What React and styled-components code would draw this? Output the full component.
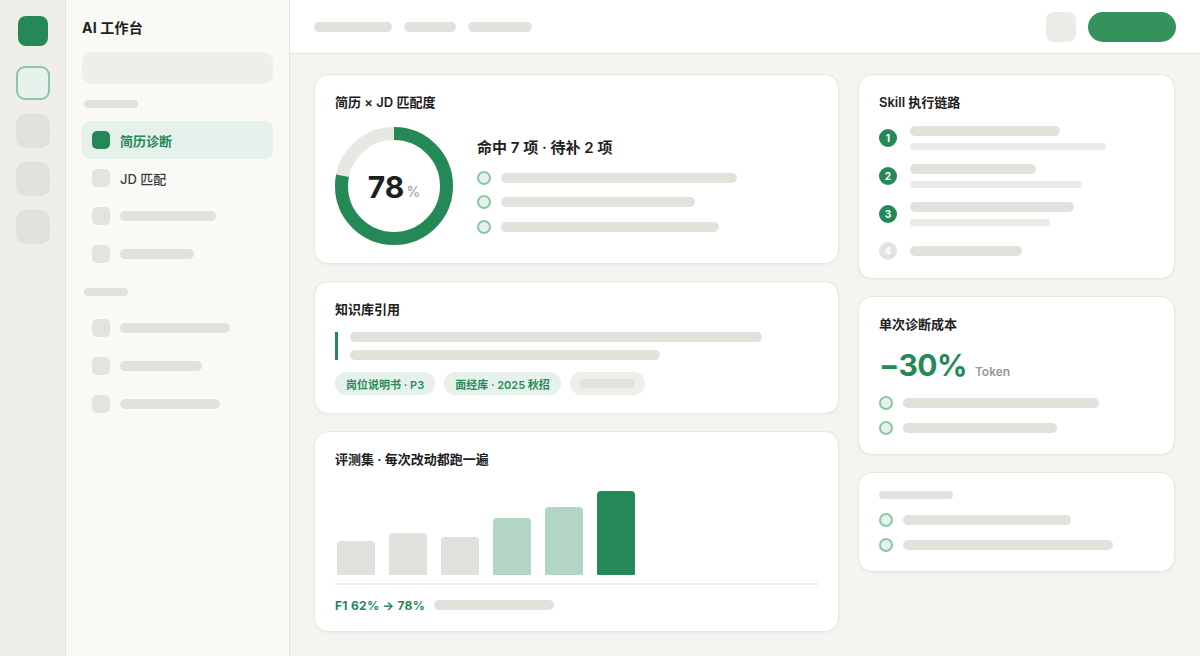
import React from "react";
import styled, { createGlobalStyle } from "styled-components";

const G = "#248957";
const BAR = "#e2e1dc";
const BAR_LIGHT = "#ecebe7";

const Global = createGlobalStyle`
  * { box-sizing: border-box; }
  html, body { margin: 0; padding: 0; }
  body {
    font-family: Inter, "Noto Sans CJK SC", "Noto Sans", sans-serif;
    color: #1d211e;
    background: #f5f4f0;
  }
`;

const Shell = styled.div`
  display: flex;
  width: 1200px;
  height: 656px;
  overflow: hidden;
`;

const Rail = styled.nav`
  width: 66px;
  flex: none;
  background: #efeee9;
  border-right: 1px solid #e4e2dc;
  display: flex;
  flex-direction: column;
  align-items: center;
  padding-top: 16px;
  gap: 14px;
`;

const RailLogo = styled.div`
  width: 30px;
  height: 30px;
  border-radius: 8px;
  background: ${G};
  margin-bottom: 6px;
`;

const RailItem = styled.div`
  width: 34px;
  height: 34px;
  border-radius: 9px;
  background: ${(p) => (p.$active ? "#e6f2ec" : "#e2e1dc")};
  border: ${(p) => (p.$active ? "2px solid #8cc6a6" : "none")};
`;

const Side = styled.aside`
  width: 224px;
  flex: none;
  background: #faf9f6;
  border-right: 1px solid #e6e4de;
  padding: 18px 16px 0;
  display: flex;
  flex-direction: column;
`;

const SideTitle = styled.div`
  font-size: 14px;
  font-weight: 700;
  line-height: 20px;
  letter-spacing: 0.2px;
`;

const Search = styled.div`
  margin-top: 14px;
  height: 32px;
  border-radius: 10px;
  background: #efeeea;
`;

const SectionLabel = styled.div`
  height: 8px;
  width: ${(p) => p.$w}px;
  border-radius: 4px;
  background: ${BAR};
  margin: ${(p) => p.$m};
`;

const NavList = styled.div`
  display: flex;
  flex-direction: column;
  margin-top: 13px;
`;

const NavItem = styled.div`
  height: 38px;
  display: flex;
  align-items: center;
  gap: 10px;
  padding-left: 10px;
  border-radius: 8px;
  background: ${(p) => (p.$active ? "#e6f1eb" : "transparent")};
  font-size: 13px;
  font-weight: ${(p) => (p.$active ? 600 : 500)};
  color: ${(p) => (p.$active ? G : "#3a3d3a")};
`;

const NavIcon = styled.span`
  width: 18px;
  height: 18px;
  border-radius: 5px;
  background: ${(p) => (p.$active ? G : "#e4e3df")};
  flex: none;
`;

const Bar = styled.span`
  display: block;
  width: ${(p) => p.$w}px;
  height: ${(p) => p.$h || 10}px;
  border-radius: ${(p) => (p.$h || 10) / 2}px;
  background: ${(p) => p.$c || BAR};
  flex: none;
`;

const Main = styled.main`
  flex: 1;
  display: flex;
  flex-direction: column;
  min-width: 0;
`;

const TopBar = styled.header`
  height: 54px;
  flex: none;
  background: #fff;
  border-bottom: 1px solid #e6e4de;
  display: flex;
  align-items: center;
  padding: 0 24px;
  gap: 12px;
`;

const TopSpacer = styled.div`
  flex: 1;
`;

const IconBtn = styled.div`
  width: 30px;
  height: 30px;
  border-radius: 8px;
  background: #ecebe6;
`;

const PrimaryBtn = styled.div`
  width: 88px;
  height: 30px;
  border-radius: 15px;
  background: #35925f;
`;

const Content = styled.div`
  display: grid;
  grid-template-columns: 525px 317px;
  column-gap: 19px;
  padding: 20px 24px;
  align-items: start;
`;

const Col = styled.div`
  display: flex;
  flex-direction: column;
  gap: ${(p) => p.$gap}px;
`;

const Card = styled.section`
  background: #fff;
  border: 1px solid #e8e6e0;
  border-radius: 14px;
  padding: 18px 20px;
  box-shadow: 0 1px 3px rgba(40, 36, 20, 0.04);
`;

const CardTitle = styled.h3`
  margin: 0;
  font-size: 13px;
  line-height: 18px;
  font-weight: 600;
  color: #1d211e;
`;

const MatchBody = styled.div`
  margin-top: 16px;
  display: flex;
  align-items: center;
  gap: 24px;
`;

const Donut = styled.div`
  position: relative;
  width: 118px;
  height: 118px;
  flex: none;
`;

const DonutLabel = styled.div`
  position: absolute;
  inset: 0;
  display: flex;
  align-items: center;
  justify-content: center;
  padding-top: 2px;
`;

const BigNum = styled.span`
  font-size: 30px;
  font-weight: 700;
  color: #1d211e;
  line-height: 1;
`;

const Pct = styled.span`
  font-size: 14px;
  color: #9a9a95;
  margin-left: 2px;
  margin-top: 8px;
`;

const MatchInfo = styled.div`
  display: flex;
  flex-direction: column;
`;

const MatchHead = styled.div`
  font-size: 15px;
  font-weight: 600;
  line-height: 20px;
  margin-bottom: 12px;
`;

const CheckList = styled.div`
  display: flex;
  flex-direction: column;
  gap: ${(p) => p.$gap}px;
  margin-top: ${(p) => p.$mt || 0}px;
`;

const CheckRow = styled.div`
  display: flex;
  align-items: center;
  height: 16px;
  gap: 10px;
`;

const Dot = styled.span`
  width: 14px;
  height: 14px;
  border-radius: 50%;
  border: 2px solid #8cc6a6;
  background: #e6f2ec;
  flex: none;
`;

const Quote = styled.div`
  margin-top: 14px;
  border-left: 3px solid ${G};
  padding-left: 12px;
  display: flex;
  flex-direction: column;
  gap: 8px;
`;

const Tags = styled.div`
  margin-top: 12px;
  display: flex;
  gap: 9px;
`;

const Tag = styled.span`
  height: 23px;
  padding: 0 ${(p) => (p.$muted ? 10 : 11)}px;
  border-radius: 12px;
  background: ${(p) => (p.$muted ? "#efeeea" : "#e6f1eb")};
  color: #2a8a59;
  font-size: 11px;
  font-weight: 600;
  display: inline-flex;
  align-items: center;
  white-space: nowrap;
`;

const Chart = styled.div`
  margin-top: 23px;
  height: 84px;
  display: flex;
  align-items: flex-end;
  gap: 14px;
  padding-left: 2px;
`;

const ChartBar = styled.div`
  width: 38px;
  border-radius: 4px 4px 1px 1px;
  background: ${(p) => p.$c};
`;

const Baseline = styled.div`
  margin-top: 8px;
  height: 2px;
  background: #eeede9;
`;

const ChartFoot = styled.div`
  margin-top: 12px;
  display: flex;
  align-items: center;
  gap: 9px;
  height: 16px;
`;

const FootText = styled.span`
  font-size: 12px;
  font-weight: 700;
  color: ${G};
  letter-spacing: 0.3px;
`;

const Steps = styled.div`
  margin-top: 15px;
  display: flex;
  flex-direction: column;
  gap: 14px;
`;

const Step = styled.div`
  display: flex;
  align-items: center;
  gap: 13px;
  margin-top: ${(p) => (p.$last ? 2 : 0)}px;
`;

const StepNum = styled.span`
  width: 18px;
  height: 18px;
  border-radius: 50%;
  background: ${(p) => (p.$done ? G : "#e4e3df")};
  color: #fff;
  font-size: 10px;
  font-weight: 700;
  display: flex;
  align-items: center;
  justify-content: center;
  flex: none;
`;

const StepLines = styled.div`
  display: flex;
  flex-direction: column;
  gap: 7px;
`;

const CostLine = styled.div`
  margin-top: 14px;
  display: flex;
  align-items: baseline;
  gap: 8px;
  height: 36px;
  line-height: 36px;
`;

const CostValue = styled.span`
  font-size: 30px;
  font-weight: 700;
  color: ${G};
  letter-spacing: -0.6px;
`;

const CostUnit = styled.span`
  font-size: 12px;
  font-weight: 600;
  color: #9a9893;
`;

const donutR = 52.5;
const circ = 2 * Math.PI * donutR;

function MatchDonut({ value }) {
  return (
    <Donut>
      <svg width="118" height="118" viewBox="0 0 118 118">
        <circle cx="59" cy="59" r={donutR} fill="none" stroke="#e8e7e2" strokeWidth="13" />
        <circle
          cx="59"
          cy="59"
          r={donutR}
          fill="none"
          stroke={G}
          strokeWidth="13"
          strokeDasharray={`${(circ * value) / 100} ${circ}`}
          transform="rotate(-90 59 59)"
        />
      </svg>
      <DonutLabel>
        <BigNum>{value}</BigNum>
        <Pct>%</Pct>
      </DonutLabel>
    </Donut>
  );
}

const navTop = [
  { label: "简历诊断", active: true },
  { label: "JD 匹配" },
  { w: 96 },
  { w: 74 },
];
const navBottom = [{ w: 110 }, { w: 82 }, { w: 100 }];

const bars = [
  { h: 34, c: "#e1e0dc" },
  { h: 42, c: "#e1e0dc" },
  { h: 38, c: "#e1e0dc" },
  { h: 57, c: "#b3d6c4" },
  { h: 68, c: "#b3d6c4" },
  { h: 84, c: G },
];

const steps = [
  { n: 1, a: 150, b: 196, done: true },
  { n: 2, a: 126, b: 172, done: true },
  { n: 3, a: 164, b: 140, done: true },
  { n: 4, a: 112 },
];

export default function App() {
  return (
    <Shell>
      <Global />
      <Rail>
        <RailLogo />
        <RailItem $active />
        <RailItem />
        <RailItem />
        <RailItem />
      </Rail>
      <Side>
        <SideTitle>AI 工作台</SideTitle>
        <Search />
        <SectionLabel $w={54} $m="16px 0 0 2px" />
        <NavList>
          {navTop.map((n, i) => (
            <NavItem key={i} $active={n.active}>
              <NavIcon $active={n.active} />
              {n.label ? n.label : <Bar $w={n.w} />}
            </NavItem>
          ))}
        </NavList>
        <SectionLabel $w={44} $m="15px 0 0 2px" />
        <NavList>
          {navBottom.map((n, i) => (
            <NavItem key={i}>
              <NavIcon />
              <Bar $w={n.w} />
            </NavItem>
          ))}
        </NavList>
      </Side>
      <Main>
        <TopBar>
          <Bar $w={78} />
          <Bar $w={52} />
          <Bar $w={64} />
          <TopSpacer />
          <IconBtn />
          <PrimaryBtn />
        </TopBar>
        <Content>
          <Col $gap={17}>
            <Card>
              <CardTitle>简历 × JD 匹配度</CardTitle>
              <MatchBody>
                <MatchDonut value={78} />
                <MatchInfo>
                  <MatchHead>命中 7 项 · 待补 2 项</MatchHead>
                  <CheckList $gap={8.5}>
                    {[236, 194, 218].map((w, i) => (
                      <CheckRow key={i}>
                        <Dot />
                        <Bar $w={w} />
                      </CheckRow>
                    ))}
                  </CheckList>
                </MatchInfo>
              </MatchBody>
            </Card>
            <Card>
              <CardTitle>知识库引用</CardTitle>
              <Quote>
                <Bar $w={412} />
                <Bar $w={310} />
              </Quote>
              <Tags>
                <Tag>岗位说明书 · P3</Tag>
                <Tag>面经库 · 2025 秋招</Tag>
                <Tag $muted>
                  <Bar $w={55} $h={9} />
                </Tag>
              </Tags>
            </Card>
            <Card>
              <CardTitle>评测集 · 每次改动都跑一遍</CardTitle>
              <Chart>
                {bars.map((b, i) => (
                  <ChartBar key={i} $c={b.c} style={{ height: b.h }} />
                ))}
              </Chart>
              <Baseline />
              <ChartFoot>
                <FootText>F1 62% → 78%</FootText>
                <Bar $w={120} />
              </ChartFoot>
            </Card>
          </Col>
          <Col $gap={17}>
            <Card>
              <CardTitle>Skill 执行链路</CardTitle>
              <Steps>
                {steps.map((s) => (
                  <Step key={s.n} $last={!s.b}>
                    <StepNum $done={s.done}>{s.n}</StepNum>
                    <StepLines>
                      <Bar $w={s.a} />
                      {s.b && <Bar $w={s.b} $h={7} $c={BAR_LIGHT} />}
                    </StepLines>
                  </Step>
                ))}
              </Steps>
            </Card>
            <Card>
              <CardTitle>单次诊断成本</CardTitle>
              <CostLine>
                <CostValue>−30%</CostValue>
                <CostUnit>Token</CostUnit>
              </CostLine>
              <CheckList $gap={9} $mt={12}>
                <CheckRow>
                  <Dot />
                  <Bar $w={196} />
                </CheckRow>
                <CheckRow>
                  <Dot />
                  <Bar $w={154} />
                </CheckRow>
              </CheckList>
            </Card>
            <Card>
              <Bar $w={74} $h={8} />
              <CheckList $gap={9} $mt={13}>
                <CheckRow>
                  <Dot />
                  <Bar $w={168} />
                </CheckRow>
                <CheckRow>
                  <Dot />
                  <Bar $w={210} />
                </CheckRow>
              </CheckList>
            </Card>
          </Col>
        </Content>
      </Main>
    </Shell>
  );
}
